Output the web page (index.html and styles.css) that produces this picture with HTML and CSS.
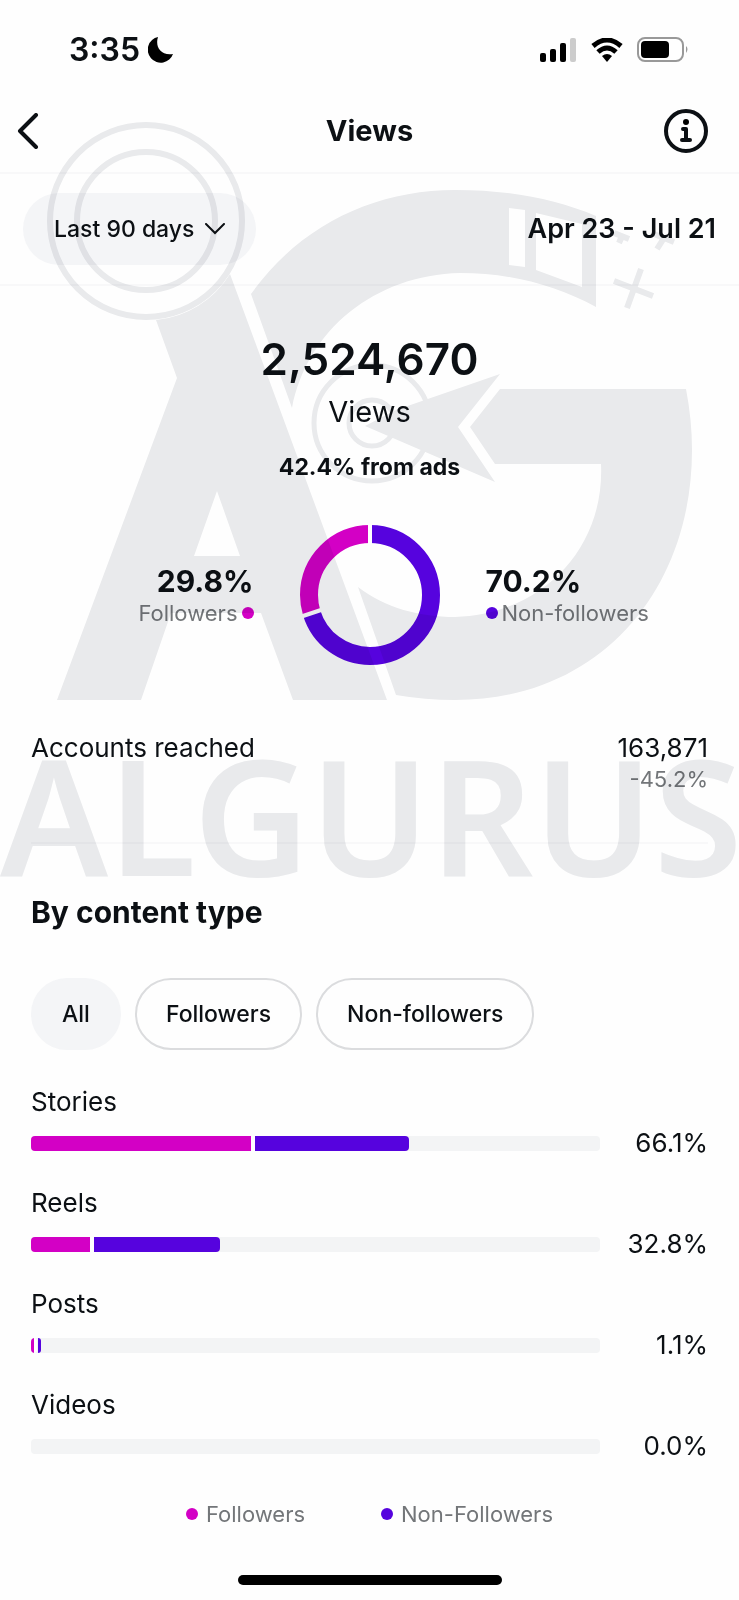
FILE: index.html
```
<!DOCTYPE html>
<html lang="en">
<head>
    <meta charset="UTF-8">
    <meta name="viewport" content="width=device-width, initial-scale=1.0">
    <title>Views</title>
    <link rel="stylesheet" href="styles.css">
</head>
<body>
    <div class="status-bar">
        <div class="clock">
            <span>3:35</span>
            <svg width="26" height="26" viewBox="0 0 26 26"><path d="M10 0C7 9 12 19 25 17A13 13 0 1 1 10 0Z"/></svg>
        </div>
        <div class="indicators">
            <svg width="37" height="24" viewBox="0 0 37 24">
                <rect x="0" y="15" width="6" height="9" rx="2"/>
                <rect x="10" y="11" width="6" height="13" rx="2"/>
                <rect x="20" y="5" width="6" height="19" rx="2"/>
                <rect x="30" y="0" width="6" height="24" rx="2" fill="#ccc"/>
            </svg>
            <svg width="32" height="24" viewBox="0 0 32 24">
                <path d="M2 8Q16-4 30 8M7 14Q16 6 25 14" fill="none" stroke="#000" stroke-width="5"/>
                <path d="M11 18Q16 14 21 18L16 24Z"/>
            </svg>
            <svg width="52" height="25" viewBox="0 0 52 25">
                <rect x="1" y="1" width="45" height="23" rx="7" fill="#fff" stroke="#999" stroke-width="2"/>
                <rect x="4" y="4" width="28" height="17" rx="4"/>
                <path d="M49 9Q52 12 49 16Z" fill="#999"/>
            </svg>
        </div>
    </div>

    <header class="nav">
        <button class="icon-button back" aria-label="Back">
            <svg width="24" height="36" viewBox="0 0 24 36"><path d="M20 2L4 18L20 34" fill="none" stroke="#0c1014" stroke-width="4" stroke-linecap="round" stroke-linejoin="round"/></svg>
        </button>
        <h1>Views</h1>
        <button class="icon-button info" aria-label="About views">
            <svg width="44" height="44" viewBox="0 0 44 44">
                <circle cx="22" cy="22" r="20" fill="none" stroke="#0c1014" stroke-width="4"/>
                <circle cx="22" cy="13" r="3"/>
                <path d="M19 20H22V31M18 31H26" fill="none" stroke="#0c1014" stroke-width="4" stroke-linecap="round" stroke-linejoin="round"/>
            </svg>
        </button>
    </header>

    <div class="range">
        <button class="range-button">
            Last 90 days
            <svg width="20" height="12" viewBox="0 0 20 12"><path d="M1 1L10 10L19 1" fill="none" stroke="#0c1014" stroke-width="2" stroke-linecap="round"/></svg>
        </button>
        <span class="dates">Apr 23 - Jul 21</span>
    </div>

    <main>
        <section class="summary">
            <p class="total">2,524,670</p>
            <p class="total-label">Views</p>
            <p class="ads">42.4% from ads</p>
            <div class="split">
                <div class="share followers">
                    <strong>29.8%</strong>
                    <span>Followers<i class="dot pink"></i></span>
                </div>
                <svg class="donut" width="142" height="142" viewBox="0 0 142 142">
                    <circle class="ring-purple" cx="71" cy="71" r="61" pathLength="100" stroke-dasharray="70.2 29.8"/>
                    <circle class="ring-pink" cx="71" cy="71" r="61" pathLength="100" stroke-dasharray="29.8 70.2" stroke-dashoffset="-70.2"/>
                    <path d="M71 0V20M1 93L22 86" stroke="#fff" stroke-width="4"/>
                </svg>
                <div class="share">
                    <strong>70.2%</strong>
                    <span><i class="dot purple"></i>Non-followers</span>
                </div>
            </div>
            <div class="reached">
                <span>Accounts reached</span>
                <div class="reached-value">
                    <span>163,871</span>
                    <small>-45.2%</small>
                </div>
            </div>
        </section>

        <section class="content-type">
            <h2>By content type</h2>
            <div class="filters">
                <button class="filter active">All</button>
                <button class="filter">Followers</button>
                <button class="filter">Non-followers</button>
            </div>

            <div class="row">
                <h3>Stories</h3>
                <div class="row-line">
                    <div class="track"><div class="pink" style="width: 38.6%"></div><div class="purple" style="width: 27.2%"></div></div>
                    <span>66.1%</span>
                </div>
            </div>
            <div class="row">
                <h3>Reels</h3>
                <div class="row-line">
                    <div class="track"><div class="pink" style="width: 10.4%"></div><div class="purple" style="width: 22.2%"></div></div>
                    <span>32.8%</span>
                </div>
            </div>
            <div class="row">
                <h3>Posts</h3>
                <div class="row-line">
                    <div class="track"><div class="pink" style="width: 0.5%"></div><div class="purple" style="width: 0.6%"></div></div>
                    <span>1.1%</span>
                </div>
            </div>
            <div class="row">
                <h3>Videos</h3>
                <div class="row-line">
                    <div class="track"></div>
                    <span>0.0%</span>
                </div>
            </div>

            <div class="legend">
                <span><i class="dot pink"></i>Followers</span>
                <span><i class="dot purple"></i>Non-Followers</span>
            </div>
        </section>
    </main>
    <div class="home-bar"></div>

    <!-- brand watermark over the page -->
    <svg class="watermark" viewBox="0 0 739 900" aria-hidden="true">
        <g fill="none" stroke="#eaebed">
            <circle cx="146" cy="221" r="96" stroke-width="6"/>
            <circle cx="146" cy="221" r="69" stroke-width="6"/>
            <circle cx="372" cy="423" r="58" stroke-width="5"/>
            <circle cx="372" cy="423" r="23" stroke-width="5"/>
            <path d="M614 281L653 296M641 269L627 308M614 233L629 239M622 236L619 243M654 234L674 242M664 238L657 249" stroke-width="6"/>
        </g>
        <g fill="#eaebed" fill-rule="evenodd">
            <path d="M156 320A98 98 0 0 0 230 274L387 700H293L261 613H171L141 700H57L177 378ZM217 491L194 556H240Z"/>
            <path d="M251 294C300 225 375 190 455 190C510 190 555 199 596 216V307C555 285 510 273 460 273C375 275 307 330 292 408ZM509 208V265L525 267V210ZM536 213V270L582 287V224Z"/>
            <path d="M500 389H686Q692 420 692 450C692 590 600 700 455 700Q425 700 396 695L358 587C385 608 420 617 455 617C540 615 605 550 601 464H495L470 427Z"/>
            <path d="M500 374L458 427L495 482L365 426L396 410Z"/>
        </g>
        <text x="0" y="876">ALGURUS</text>
    </svg>
</body>
</html>
```
FILE: styles.css
```
* {
    box-sizing: border-box;
}

body {
    font-family: Inter, sans-serif;
    font-size: 26px;
    line-height: 32px;
    color: #0c1014;
    background-color: #fefefe;
    margin: 0;
    position: relative;
}

h1, h2, h3, p {
    margin: 0;
}

button {
    font: inherit;
    color: inherit;
    background: none;
    border: none;
    padding: 0;
    cursor: pointer;
}

svg {
    display: block;
}

.status-bar {
    display: flex;
    justify-content: space-between;
    align-items: center;
    height: 99px;
    padding: 0 50px 0 69px;
}

.clock {
    display: flex;
    align-items: center;
    gap: 8px;
    font-size: 32px;
    font-weight: 600;
}

.indicators {
    display: flex;
    align-items: center;
    gap: 14px;
}

.nav {
    display: grid;
    grid-template-columns: 1fr auto 1fr;
    align-items: center;
    height: 75px;
    padding: 0 31px 10px;
    border-bottom: 2px solid #f8f8f9;
}

.nav h1 {
    font-size: 29px;
    font-weight: 700;
}

.icon-button {
    justify-self: start;
}

.back {
    margin-left: -15px;
}

.info {
    justify-self: end;
}

.range {
    display: flex;
    justify-content: space-between;
    align-items: center;
    height: 112px;
    padding: 0 23px;
    border-bottom: 2px solid #f8f8f9;
}

.range-button {
    display: flex;
    align-items: center;
    gap: 11px;
    height: 72px;
    padding: 0 31px;
    border-radius: 36px;
    background-color: #f4f5f7;
    font-size: 23px;
    font-weight: 500;
}

.dates {
    font-size: 27px;
    font-weight: 600;
}

main {
    padding: 0 31px;
}

.summary {
    padding-top: 47px;
    border-bottom: 2px solid #f8f8f9;
}

.total, .total-label, .ads {
    text-align: center;
}

.total {
    font-size: 44px;
    font-weight: 600;
    line-height: 52px;
}

.total-label {
    margin-top: 11px;
    font-size: 29px;
}

.ads {
    margin-top: 23px;
    font-size: 23px;
    font-weight: 700;
}

.split {
    display: grid;
    grid-template-columns: 1fr auto 1fr;
    align-items: center;
    gap: 45px;
    margin-top: 41px;
}

.share {
    display: flex;
    flex-direction: column;
    padding-top: 4px;
}

.share strong {
    font-size: 30px;
    font-weight: 700;
}

.share span, .legend span {
    display: flex;
    align-items: center;
    gap: 4px;
    font-size: 22px;
    color: #737679;
}

.followers {
    align-items: flex-end;
}

.dot {
    width: 12px;
    height: 12px;
    border-radius: 50%;
}

.pink {
    background-color: #d300c5;
}

.purple {
    background-color: #5603de;
}

.donut circle {
    fill: none;
    stroke-width: 18px;
    transform: rotate(-90deg);
    transform-origin: center;
}

.ring-purple {
    stroke: #5603de;
}

.ring-pink {
    stroke: #d300c5;
}

.reached {
    display: flex;
    justify-content: space-between;
    margin-top: 66px;
    padding-bottom: 48px;
}

.reached-value {
    display: flex;
    flex-direction: column;
    align-items: flex-end;
}

.reached small {
    font-size: 22px;
    line-height: 30px;
    color: #737679;
}

.content-type {
    padding-top: 52px;
}

.content-type h2 {
    font-size: 30px;
    font-weight: 700;
}

.filters {
    display: flex;
    gap: 14px;
    margin: 50px 0 36px;
}

.filter {
    height: 72px;
    padding: 0 29px;
    border: 2px solid #dbdcde;
    border-radius: 36px;
    font-size: 23px;
    font-weight: 500;
}

.filter.active {
    background-color: #f4f5f7;
    border-color: #f4f5f7;
}

.row {
    margin-bottom: 24px;
}

.row h3 {
    font-size: 26px;
    font-weight: 400;
    margin-bottom: 5px;
}

.row-line {
    display: grid;
    grid-template-columns: 1fr 108px;
    align-items: center;
    line-height: 40px;
    text-align: right;
}

.track {
    display: flex;
    gap: 4px;
    height: 15px;
    border-radius: 4px;
    background-color: #f3f4f5;
    overflow: hidden;
}

.track .purple {
    border-radius: 0 4px 4px 0;
    box-shadow: -4px 0 #fff;
}

.legend {
    display: flex;
    justify-content: center;
    gap: 76px;
    margin-top: 32px;
}

.legend span {
    gap: 8px;
}

.home-bar {
    width: 264px;
    height: 10px;
    margin: 45px auto 15px;
    border-radius: 5px;
    background-color: #000;
}

.watermark {
    position: absolute;
    top: 0;
    left: 0;
    width: 100%;
    pointer-events: none;
    mix-blend-mode: multiply;
}

.watermark text {
    font-family: "Noto Sans", sans-serif;
    font-size: 161px;
    font-weight: 600;
    fill: #eaebed;
}
```
